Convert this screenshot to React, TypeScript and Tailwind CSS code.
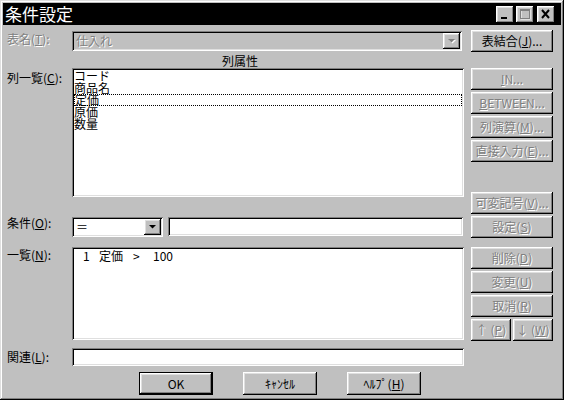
import React from "react";

const raised =
  "bg-[#c0c0c0] shadow-[inset_-1px_-1px_#000,inset_1px_1px_#fff,inset_-2px_-2px_#808080,inset_2px_2px_#dfdfdf]";
const sunken =
  "shadow-[inset_1px_1px_#808080,inset_-1px_-1px_#fff,inset_2px_2px_#000,inset_-2px_-2px_#dfdfdf]";
const dim = "text-[#808080] [text-shadow:1px_1px_0_#fff]";

function Btn({
  children,
  disabled,
  className = "",
}: {
  children: React.ReactNode;
  disabled?: boolean;
  className?: string;
}) {
  return (
    <div
      className={`flex shrink-0 items-center justify-center whitespace-nowrap ${raised} ${
        disabled ? dim : ""
      } ${className}`}
    >
      {children}
    </div>
  );
}

function Arrow({ disabled }: { disabled?: boolean }) {
  return (
    <svg width="9" height="6" viewBox="0 0 9 6">
      {disabled && <polygon points="2,2 9,2 5.5,5.5" fill="#fff" />}
      <polygon points="1,1 8,1 4.5,4.5" fill={disabled ? "#808080" : "#000"} />
    </svg>
  );
}

function Combo({
  value,
  disabled,
  className = "",
}: {
  value: string;
  disabled?: boolean;
  className?: string;
}) {
  return (
    <div
      className={`flex shrink-0 items-center ${sunken} ${
        disabled ? "bg-[#c0c0c0]" : "bg-white"
      } ${className}`}
    >
      <span className={`flex-1 pl-[4px] ${disabled ? dim : ""}`}>{value}</span>
      <div className={`mr-[2px] flex h-[16px] w-[17px] items-center justify-center ${raised}`}>
        <Arrow disabled={disabled} />
      </div>
    </div>
  );
}

function Acc({ c }: { c: string }) {
  return <span className="underline underline-offset-[1px]">{c}</span>;
}

const columns = ["コード", "商品名", "定価", "原価", "数量"];

export default function App() {
  return (
    <div className="h-[403px] w-[567px] bg-white font-['Noto_Sans_CJK_JP',sans-serif] text-[12px] leading-[12px] text-black">
      <div
        className={`flex h-[400px] w-[564px] flex-col p-[3px] bg-[#c0c0c0] shadow-[inset_-1px_-1px_#000,inset_1px_1px_#dfdfdf,inset_-2px_-2px_#808080,inset_2px_2px_#fff]`}
      >
        {/* title bar */}
        <div className="flex h-[22px] shrink-0 items-center bg-black pl-[2px] pr-[6px]">
          <span className="text-[17px] leading-[18px] text-white">条件設定</span>
          <div className="ml-auto flex items-center">
            <Btn className="h-[17px] w-[18px]">
              <svg width="18" height="17" viewBox="0 0 18 17">
                <rect x="5" y="11" width="6" height="2" fill="#000" />
              </svg>
            </Btn>
            <Btn className="ml-[2px] h-[17px] w-[18px]">
              <svg width="18" height="17" viewBox="0 0 18 17">
                <rect x="5" y="4" width="9" height="9" fill="none" stroke="#fff" />
                <rect x="5" y="4" width="9" height="1" fill="#fff" />
                <rect x="4.5" y="3.5" width="9" height="9" fill="none" stroke="#808080" />
                <rect x="4" y="3" width="10" height="2" fill="#808080" />
              </svg>
            </Btn>
            <Btn className="ml-[3px] h-[17px] w-[18px]">
              <svg width="18" height="17" viewBox="0 0 18 17">
                <path d="M5 4 L12 12 M12 4 L5 12" stroke="#000" strokeWidth="2" />
              </svg>
            </Btn>
          </div>
        </div>

        <div className="flex flex-col pl-[4px]">
          {/* table name */}
          <div className="mt-[5px] flex h-[22px]">
            <div className={`mt-[3px] w-[65px] shrink-0 ${dim}`}>
              表名(<Acc c="T" />):
            </div>
            <Combo value="仕入れ" disabled className="mt-[1px] h-[20px] w-[390px]" />
            <Btn className="ml-[9px] h-[22px] w-[82px]">
              表結合(<Acc c="J" />)...
            </Btn>
          </div>

          {/* column list */}
          <div className="flex h-[162px]">
            <div className="w-[65px] shrink-0 pt-[20px]">
              列一覧(<Acc c="C" />):
            </div>
            <div className="flex w-[392px] shrink-0 flex-col">
              <div className="h-[16px] pl-[150px] pt-[3px]">列属性</div>
              <div className={`h-[129px] bg-white p-[2px] ${sunken}`}>
                {columns.map((c) => (
                  <div
                    key={c}
                    className={`h-[12px] ${
                      c === "定価" ? "border border-dotted border-black leading-[10px]" : "leading-[12px]"
                    }`}
                  >
                    {c}
                  </div>
                ))}
              </div>
            </div>
            <div className="ml-[7px] flex w-[82px] flex-col gap-[2px] pt-[16px]">
              <Btn disabled className="h-[22px]">
                <Acc c="I" />
                N...
              </Btn>
              <Btn disabled className="h-[22px]">
                <Acc c="B" />
                ETWEEN...
              </Btn>
              <Btn disabled className="h-[22px]">
                列演算(<Acc c="M" />)...
              </Btn>
              <Btn disabled className="h-[22px]">
                直接入力(<Acc c="E" />)...
              </Btn>
              <Btn disabled className="mt-auto h-[22px]">
                可変記号(<Acc c="V" />)...
              </Btn>
            </div>
          </div>

          {/* condition */}
          <div className="mt-[2px] flex h-[22px]">
            <div className="w-[65px] shrink-0 pt-[1px]">
              条件(<Acc c="O" />):
            </div>
            <Combo value="＝" className="mt-[1px] h-[20px] w-[91px]" />
            <div className={`ml-[5px] mt-[1px] h-[19px] w-[295px] shrink-0 bg-white ${sunken}`} />
            <Btn disabled className="ml-[8px] h-[22px] w-[82px]">
              設定(<Acc c="S" />)
            </Btn>
          </div>

          {/* list */}
          <div className="mt-[9px] flex h-[94px]">
            <div className="w-[65px] shrink-0 pt-[2px]">
              一覧(<Acc c="N" />):
            </div>
            <div className={`h-[93px] w-[392px] shrink-0 bg-white pt-[3px] ${sunken}`}>
              <div className="flex pl-[11px]">
                <span className="w-[16px]">1</span>
                <span className="w-[34px]">定価</span>
                <span className="w-[20px]">&gt;</span>
                <span>100</span>
              </div>
            </div>
            <div className="ml-[7px] flex w-[82px] flex-col gap-[2px]">
              <Btn disabled className="h-[22px]">
                削除(<Acc c="D" />)
              </Btn>
              <Btn disabled className="h-[22px]">
                変更(<Acc c="U" />)
              </Btn>
              <Btn disabled className="h-[22px]">
                取消(<Acc c="R" />)
              </Btn>
              <div className="flex gap-[2px]">
                <Btn disabled className="h-[22px] w-[40px]">
                  ↑ (<Acc c="P" />)
                </Btn>
                <Btn disabled className="h-[22px] w-[40px]">
                  ↓ (<Acc c="W" />)
                </Btn>
              </div>
            </div>
          </div>

          {/* relation */}
          <div className="mt-[7px] flex h-[18px]">
            <div className="w-[65px] shrink-0 pt-[3px]">
              関連(<Acc c="L" />):
            </div>
            <div className={`h-[18px] w-[392px] shrink-0 bg-white ${sunken}`} />
          </div>

          {/* bottom buttons */}
          <div className="ml-[132px] mt-[6px] flex gap-[30px]">
            <div className="h-[23px] w-[74px] border border-black">
              <Btn className="h-full w-full">OK</Btn>
            </div>
            <Btn className="h-[23px] w-[74px]">ｷｬﾝｾﾙ</Btn>
            <Btn className="h-[23px] w-[74px]">
              ﾍﾙﾌﾟ(<Acc c="H" />)
            </Btn>
          </div>
        </div>
      </div>
    </div>
  );
}
